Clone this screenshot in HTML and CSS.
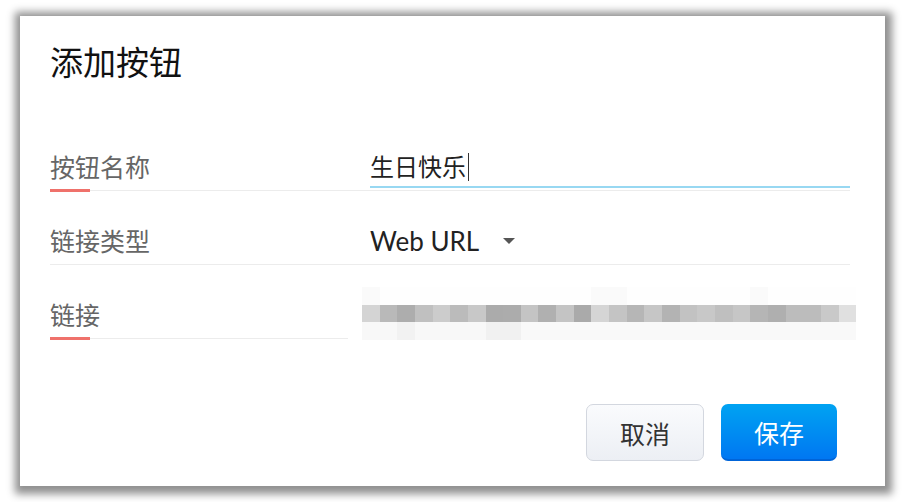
FILE: index.html
```html
<!DOCTYPE html>
<html lang="zh-CN">
<head>
    <meta charset="UTF-8">
    <meta name="viewport" content="width=device-width, initial-scale=1.0">
    <title>添加按钮</title>
    <link rel="stylesheet" href="styles.css">
</head>
<body>

    <div class="dialog">
        <h1 class="dialog-title">添加按钮</h1>

        <div class="form">
            <div class="form-row">
                <div class="form-label required">按钮名称</div>
                <div class="form-value">
                    <div class="text-input"><span>生日快乐</span><i class="caret"></i></div>
                </div>
            </div>

            <div class="form-row">
                <div class="form-label">链接类型</div>
                <div class="form-value">
                    <div class="select">
                        <span>Web URL</span>
                        <svg class="select-arrow" width="12" height="6" viewBox="0 0 12 6">
                            <path d="M0 0 L12 0 L6 6 Z" fill="#555"/>
                        </svg>
                    </div>
                </div>
            </div>

            <div class="form-row">
                <div class="form-label required">链接</div>
                <div class="form-value"></div>
                <!-- 打码区域 -->
                <div class="mosaic">
                    <div class="mosaic-top"></div>
                    <div class="mosaic-mid"></div>
                    <div class="mosaic-bottom"></div>
                </div>
            </div>
        </div>

        <div class="dialog-actions">
            <button class="btn btn-cancel">取消</button>
            <button class="btn btn-primary">保存</button>
        </div>
    </div>

</body>
</html>
```

FILE: styles.css
```css
body {
    margin: 0;
    padding: 16px 20px;
    background-color: #fff;
    font-family: Lato, "Noto Sans CJK SC", sans-serif;
    color: #222;
}
.dialog {
    width: 865px;
    height: 470px;
    box-sizing: border-box;
    padding: 24px 35px 25px 30px;
    background-color: #fff;
    box-shadow: 1px 2px 8px 6px rgba(0,0,0,0.44);
}
.dialog-title {
    margin: 0;
    font-size: 33px;
    line-height: 44px;
    font-weight: normal;
    color: #111;
}
.form {
    margin-top: 34px;
}
.form-row {
    position: relative;
    display: flex;
    align-items: flex-end;
    height: 73px;
    padding-bottom: 6px;
    box-sizing: border-box;
    border-bottom: 1px solid #ececec;
    margin-bottom: 1px;
}
.form-label {
    position: relative;
    width: 320px;
    font-size: 25px;
    line-height: 34px;
    color: #666;
    align-self: stretch;
    display: flex;
    align-items: flex-end;
}
/* 必填项的红色标记 */
.form-label.required::after {
    content: "";
    position: absolute;
    left: 0;
    bottom: -8px;
    width: 40px;
    height: 3px;
    background-color: #ef716b;
}
.form-value {
    flex: 1;
    font-size: 24px;
    line-height: 34px;
}
.text-input {
    display: flex;
    align-items: center;
    height: 34px;
    border-bottom: 2px solid #98d8f2;
    margin-bottom: -4px;
    padding-bottom: 2px;
    color: #222;
}
.caret {
    display: inline-block;
    width: 1px;
    height: 28px;
    margin-left: 2px;
    background-color: #333;
}
.select {
    display: flex;
    align-items: center;
    gap: 24px;
    font-size: 26px;
    color: #222;
}
.select-arrow {
    display: block;
}
/* 链接内容打码 */
.mosaic {
    position: absolute;
    left: 298px;
    bottom: -2px;
    width: 508px;
    height: 53px;
    padding-left: 14px;
    box-sizing: border-box;
    background-color: #fff;
    display: flex;
    flex-direction: column;
}
.mosaic > div {
    flex: 1;
}
.mosaic-top {
    background: linear-gradient(to right,
        #fafafa 0 17.6px, #fefefe 17.6px 229.5px, #fafafa 229.5px 264.8px,
        #fefefe 264.8px 388.3px, #fafafa 388.3px 406px, #fefefe 406px 494px);
}
.mosaic-mid {
    background: linear-gradient(to right,
        #d4d4d4 0 17.6px, #b9b9b9 17.6px 35.3px, #adadad 35.3px 53px,
        #c0c0c0 53px 70.6px, #cccccc 70.6px 88.3px, #bbbbbb 88.3px 105.9px,
        #c8c8c8 105.9px 123.6px, #ababab 123.6px 141.2px, #acacac 141.2px 158.9px,
        #c4c4c4 158.9px 176.5px, #b0b0b0 176.5px 194.2px, #c4c4c4 194.2px 211.8px,
        #aaaaaa 211.8px 229.5px, #d5d5d5 229.5px 247.1px, #c4c4c4 247.1px 264.8px,
        #b6b6b6 264.8px 282.4px, #c6c6c6 282.4px 300px, #b3b3b3 300px 317.7px,
        #c2c2c2 317.7px 335.4px, #c8c8c8 335.4px 353px, #bfbfbf 353px 370.7px,
        #c6c6c6 370.7px 388.3px, #b5b5b5 388.3px 406px, #afafaf 406px 423.6px,
        #bcbcbc 423.6px 441.3px, #bcbcbc 441.3px 458.9px, #c9c9c9 458.9px 476.6px,
        #e0e0e0 476.6px 494px);
}
.mosaic-bottom {
    background: linear-gradient(to right,
        #f8f8f8 0 35.3px, #f2f2f2 35.3px 53px, #f8f8f8 53px 123.6px,
        #f1f1f1 123.6px 158.9px, #f9f9f9 158.9px 494px);
}
.dialog-actions {
    display: flex;
    justify-content: flex-end;
    gap: 17px;
    margin-top: 65px;
    padding-right: 13px;
}
.btn {
    height: 57px;
    border-radius: 7px;
    font-family: "Noto Sans CJK SC", sans-serif;
    font-size: 25px;
    cursor: pointer;
}
.btn-cancel {
    width: 118px;
    border: 1px solid #d3d7df;
    background: linear-gradient(#fafbfd, #eceff4);
    color: #333;
}
.btn-primary {
    width: 116px;
    border: none;
    border-bottom: 2px solid #0064d8;
    background: linear-gradient(#00a3f2, #0077f2);
    color: #fff;
}
```
